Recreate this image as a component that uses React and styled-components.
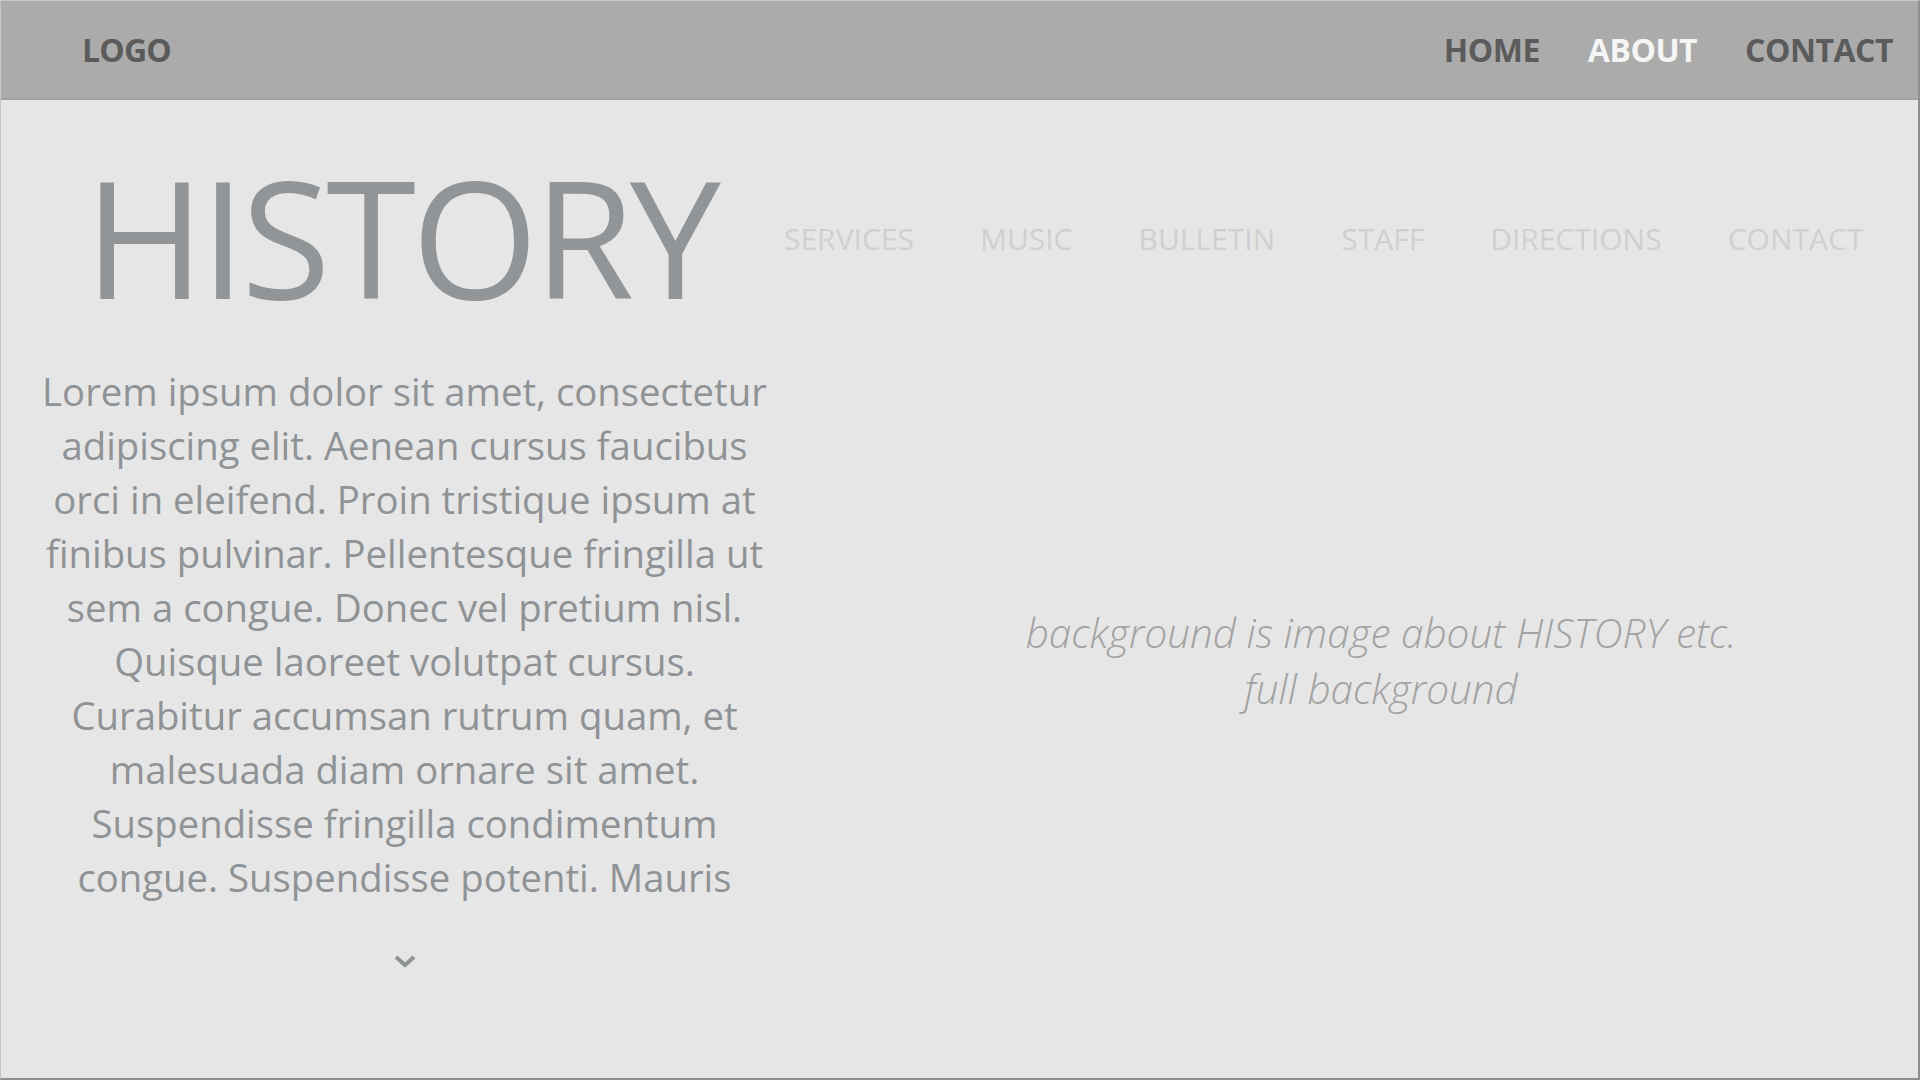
import styled, { createGlobalStyle } from "styled-components";

const GlobalStyle = createGlobalStyle`
  html, body {
    margin: 0;
    padding: 0;
    background: #e6e6e6;
    font-family: "Open Sans", "Noto Sans", sans-serif;
  }
  * { box-sizing: border-box; }
`;

const Page = styled.div`
  width: 1920px;
  height: 1080px;
  display: flex;
  flex-direction: column;
  background: #e6e6e6;
  border-top: 1px solid #c6c6c6;
  border-left: 1px solid #c6c6c6;
  border-right: 2px solid #8e8e8e;
  border-bottom: 2px solid #8e8e8e;
  overflow: hidden;
`;

const Header = styled.header`
  height: 99px;
  flex-shrink: 0;
  display: flex;
  align-items: center;
  justify-content: space-between;
  padding: 0 25px 0 81px;
  background: #ababab;
  border-bottom: 2px solid #9fa4a7;
`;

const Logo = styled.div`
  font-size: 32px;
  font-weight: 700;
  color: #5b5b5b;
  letter-spacing: -0.8px;
`;

const TopNav = styled.nav`
  display: flex;
  gap: 48px;
`;

const TopLink = styled.a`
  font-size: 32px;
  font-weight: 700;
  letter-spacing: -0.5px;
  color: ${(p) => (p.$active ? "#f5f5f5" : "#5b5b5b")};
  text-decoration: none;
`;

const Main = styled.main`
  flex: 1;
  display: grid;
  grid-template-columns: 783px 1fr;
`;

const LeftColumn = styled.section`
  display: flex;
  flex-direction: column;
  align-items: center;
  padding: 54px 0 0 24px;
`;

const Title = styled.h1`
  margin: 0 8px 0 0;
  font-size: 163px;
  line-height: 164px;
  font-weight: 400;
  color: #929598;
  letter-spacing: -4.5px;
`;

const Body = styled.p`
  margin: 46px 0 0;
  font-size: 38.3px;
  line-height: 54px;
  color: #8f9396;
  text-align: center;
  white-space: nowrap;
`;

const Chevron = styled.svg`
  margin-top: 51px;
  width: 22px;
  height: 14px;
`;

const RightColumn = styled.section`
  display: flex;
  flex-direction: column;
  padding-top: 119px;
`;

const SubNav = styled.nav`
  display: flex;
  gap: 66px;
`;

const SubLink = styled.a`
  font-size: 30px;
  line-height: 40px;
  font-weight: 400;
  color: #d0d0d0;
  text-decoration: none;
`;

const Caption = styled.p`
  margin: 346px 0 0 60px;
  font-size: 40.5px;
  line-height: 56px;
  font-weight: 300;
  font-style: italic;
  color: #a2a2a2;
  text-align: center;
`;

const topLinks = [
  { label: "HOME" },
  { label: "ABOUT", active: true },
  { label: "CONTACT" },
];

const subLinks = ["SERVICES", "MUSIC", "BULLETIN", "STAFF", "DIRECTIONS", "CONTACT"];

const bodyLines = [
  "Lorem ipsum dolor sit amet, consectetur",
  "adipiscing elit. Aenean cursus faucibus",
  "orci in eleifend. Proin tristique ipsum at",
  "finibus pulvinar. Pellentesque fringilla ut",
  "sem a congue. Donec vel pretium nisl.",
  "Quisque laoreet volutpat cursus.",
  "Curabitur accumsan rutrum quam, et",
  "malesuada diam ornare sit amet.",
  "Suspendisse fringilla condimentum",
  "congue. Suspendisse potenti. Mauris",
];

const App = () => {
  return (
    <>
      <GlobalStyle />
      <Page>
        <Header>
          <Logo>LOGO</Logo>
          <TopNav>
            {topLinks.map((l) => (
              <TopLink key={l.label} href="#" $active={l.active}>
                {l.label}
              </TopLink>
            ))}
          </TopNav>
        </Header>
        <Main>
          <LeftColumn>
            <Title>HISTORY</Title>
            <Body>
              {bodyLines.map((line, i) => (
                <span key={i}>
                  {line}
                  {i < bodyLines.length - 1 && <br />}
                </span>
              ))}
            </Body>
            <Chevron viewBox="0 0 22 14">
              <polyline
                points="2,2 11,10 20,2"
                fill="none"
                stroke="#8f9396"
                strokeWidth="4"
              />
            </Chevron>
          </LeftColumn>
          <RightColumn>
            <SubNav>
              {subLinks.map((s) => (
                <SubLink key={s} href="#">
                  {s}
                </SubLink>
              ))}
            </SubNav>
            <Caption>
              background is image about HISTORY etc.
              <br />
              full background
            </Caption>
          </RightColumn>
        </Main>
      </Page>
    </>
  );
};

export default App;
